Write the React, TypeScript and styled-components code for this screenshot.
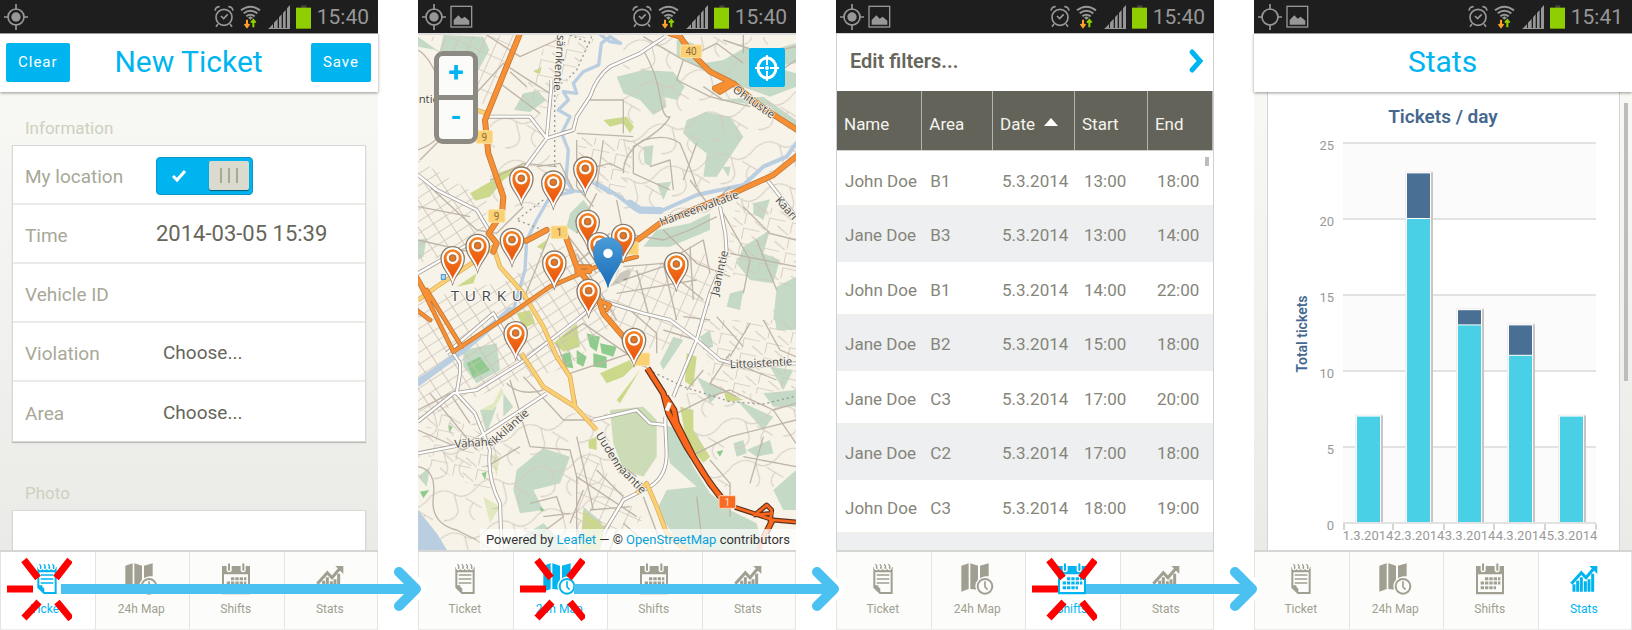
import React from "react";
import styled, { createGlobalStyle, css } from "styled-components";

const BLUE = "#00b4f0";
const ARROW = "#4ac1f0";
const TAUPE = "#a09f91";

const GlobalStyle = createGlobalStyle`
  *, *::before, *::after { box-sizing: border-box; }
  body { margin: 0; background: #fff; font-family: Roboto, sans-serif; color: #66665a; }
  button, input, select { font-family: inherit; }
  a { color: inherit; text-decoration: none; }
`;

/* ---------- shared layout ---------- */

const Board = styled.main`
  display: grid;
  grid-template-columns: repeat(4, minmax(0, 1fr));
  gap: 40px;
  height: 100vh;
  min-height: 480px;
  overflow: hidden;
`;

const Phone = styled.section`
  display: flex;
  flex-direction: column;
  min-width: 0;
  min-height: 0;
`;

const Screen = styled.div`
  position: relative;
  flex: 1;
  min-height: 0;
  overflow: hidden;
  background: linear-gradient(#f8f9f4, #eaebe6);
`;

/* ---------- status bar ---------- */

const StatusRow = styled.div`
  display: flex;
  align-items: center;
  flex: none;
  height: 33px;
  padding: 0 9px 0 4px;
  background: #1e1e1e;
  color: #979797;
`;

const StatusSide = styled.div`
  display: flex;
  align-items: center;
  gap: 4px;
`;

const StatusRight = styled(StatusSide)`
  margin-left: auto;
  gap: 6px;
`;

const Clock = styled.time`
  font-size: 21px;
  line-height: 32px;
`;

function StatusBar({ time, picture, fix }: { time: string; picture?: boolean; fix: boolean }) {
  return (
    <StatusRow>
      <StatusSide>
        <svg width="24" height="26" viewBox="12 10 72 78" fill="none" stroke="#979797">
          <circle cx="48" cy="49" r="24" strokeWidth="5" />
          {fix && <circle cx="48" cy="49" r="14" fill="#979797" stroke="none" />}
          <path d="M48 10V28M48 70V88M12 49H26M70 49H84" strokeWidth="5" />
        </svg>
        {picture && (
          <svg width="23" height="23" viewBox="122 15 69 69">
            <rect x="125" y="19" width="62" height="62" fill="none" stroke="#979797" strokeWidth="4" />
            <path d="M133 74V60L147 46L157 56L166 50L180 62V74Z" fill="#979797" />
          </svg>
        )}
      </StatusSide>
      <StatusRight>
        <svg width="20" height="23" viewBox="638 17 60 69" fill="none" stroke="#979797" strokeWidth="5">
          <circle cx="668" cy="54" r="24" />
          <path d="M659 50L667 58L679 45M650 74L644 82M686 74L692 82M641 34Q643 22 655 22M695 34Q693 22 681 22" />
        </svg>
        <svg width="22" height="24" viewBox="722 12 66 72" fill="none" strokeWidth="6">
          <path d="M725 28Q753 6 782 28M733 37Q753 21 774 37M741 46Q753 36 766 46" stroke="#979797" />
          <path d="M746 50L753 56L761 50L753 46Z" fill="#979797" />
          <path d="M743 56V77M736 69L743 78L750 69" stroke="#ffa02c" />
          <path d="M762 79V58M755 65L762 57L769 65" stroke="#8fce00" />
        </svg>
        <svg width="22" height="24" viewBox="804 12 66 72" fill="#979797">
          <path d="M805 84L819 69V84ZM822 84V65L833 53V84ZM837 84V49L845 40V84ZM849 84V36L857 27V84ZM861 84V22L870 12V84Z" />
          <path d="M805 84H870V81H808Z" />
        </svg>
        <svg width="15" height="24" viewBox="885 13 45 72">
          <rect x="901" y="14" width="15" height="9" fill="#444" />
          <rect x="885" y="21" width="45" height="63" fill="#8fce00" />
        </svg>
        <Clock>{time}</Clock>
      </StatusRight>
    </StatusRow>
  );
}

/* ---------- page header ---------- */

const Header = styled.header`
  position: relative;
  z-index: 1;
  display: grid;
  grid-template-columns: 1fr auto 1fr;
  align-items: center;
  flex: none;
  height: 59px;
  padding: 0 7px 2px 6px;
  background: #fff;
  border-top: 1px solid #9a9a9a;
  box-shadow: 0 1px 3px rgba(0, 0, 0, 0.4);
`;

const Title = styled.h1`
  grid-column: 2;
  margin: 0;
  font-size: 30px;
  line-height: 48px;
  font-weight: 400;
  color: ${BLUE};
`;

const HeaderButton = styled.button<{ $end?: boolean }>`
  justify-self: ${(p) => (p.$end ? "end" : "start")};
  height: 39px;
  padding: 0 12px;
  border: 0;
  border-radius: 2px;
  background: ${BLUE};
  color: #fff;
  font-size: 15px;
  font-weight: 400;
  letter-spacing: 1px;
`;

/* ---------- tab bar ---------- */

const TabRow = styled.nav`
  position: relative;
  display: grid;
  grid-template-columns: repeat(4, 1fr);
  flex: none;
  height: 80px;
  background: #fcfcfa;
  border-top: 2px solid #d6d6d4;
`;

const Tab = styled.a<{ $active: boolean }>`
  position: relative;
  display: flex;
  flex-direction: column;
  align-items: center;
  padding: 11px 2px 0 0;
  border-left: 1px solid #e4e4e2;
  border-bottom: 1px solid #eeeeec;
  color: ${(p) => (p.$active ? BLUE : TAUPE)};
  font-size: 12px;
  line-height: 20px;
  ${(p) => p.$active && css`background: #fff;`}

  > svg { margin-bottom: 4px; }
  &:last-of-type { border-right: 1px solid #e4e4e2; }
`;

const Burst = styled.svg`
  position: absolute;
  left: 5px;
  top: 5px;
  z-index: 2;
`;

const ArrowTrack = styled.div<{ $from: number }>`
  position: absolute;
  z-index: 3;
  top: 17px;
  left: calc(${(p) => p.$from} * 25% + 61px);
  right: -50px;
  display: flex;
  align-items: center;
  pointer-events: none;
`;

const ArrowLine = styled.div`
  flex: 1;
  height: 10px;
  margin-right: -30px;
  background: ${ARROW};
`;

const icons = [
  <svg key="t" width="20" height="32" viewBox="155 762 60 96">
    <path fillRule="evenodd" d="M156 774H214V855H175L156 836ZM162 790V829H171V833L177 839V849H208V790Z" fill="currentColor" />
    <path d="M160 772Q160 781 166 781Q171 781 170 768M173 772Q173 781 178 781Q184 781 183 768M186 772Q186 781 191 781Q197 781 196 768M199 772Q199 781 204 781Q210 781 209 768" fill="none" stroke="#fcfcfa" strokeWidth="6" />
    <path d="M162 766Q168 768 166 780M175 766Q181 768 179 780M188 766Q194 768 192 780M201 766Q207 768 205 780" fill="none" stroke="currentColor" strokeWidth="4" />
    <path d="M166 798H204M166 810H204M166 822H204" stroke="currentColor" strokeWidth="5" />
  </svg>,
  <svg key="m" width="33" height="32" viewBox="417 762 99 96" fill="currentColor">
    <path d="M418 770L440 763V840L418 848ZM445 763L468 770V842L445 840ZM474 770L500 763V802Q480 800 474 812Z" />
    <circle cx="489" cy="832" r="29" fill="#fcfcfa" />
    <circle cx="489" cy="832" r="22" fill="none" stroke="currentColor" strokeWidth="6" />
    <path d="M489 817V834L497 842" fill="none" stroke="currentColor" strokeWidth="5" />
  </svg>,
  <svg key="s" width="28" height="32" viewBox="708 762 84 96" fill="currentColor">
    <path fillRule="evenodd" d="M708 771H792V856H708ZM714 796V849H786V796Z" />
    <path d="M722 768V786Q729 794 737 786V768M764 768V786Q771 794 779 786V768" fill="#fcfcfa" />
    <path d="M729 766V783M772 766V783" stroke="currentColor" strokeWidth="6" strokeLinecap="round" />
    <path d="M735 809H781M722 822H781M722 836H768" stroke="currentColor" strokeWidth="9" strokeDasharray="10 3" />
  </svg>,
  <svg key="c" width="28" height="32" viewBox="994 764 84 96" fill="none" stroke="currentColor">
    <path d="M998 826L1028 793L1042 808L1066 780" strokeWidth="9" />
    <path d="M1052 773H1076V797Z" fill="currentColor" stroke="none" />
    <path d="M1006 850V828M1017 850V817M1028 850V807M1040 850V819M1051 850V813M1062 850V796" strokeWidth="9" />
  </svg>,
];

const tabs = [
  { label: "Ticket", href: "#ticket" },
  { label: "24h Map", href: "#map" },
  { label: "Shifts", href: "#shifts" },
  { label: "Stats", href: "#stats" },
];

function TabBar({ active, arrow = true }: { active: number; arrow?: boolean }) {
  return (
    <TabRow>
      {tabs.map((t, i) => (
        <Tab key={t.label} href={t.href} $active={i === active}>
          {icons[i]}
          {t.label}
          {arrow && i === active && (
            <Burst width="66" height="64" viewBox="6 557 66 64" stroke="#f00" strokeWidth="7">
              <path d="M24 560L38 578M70 560L56 578M7 589H33M24 618L39 602M57 602L71 619" />
            </Burst>
          )}
        </Tab>
      ))}
      {arrow && (
        <ArrowTrack $from={active}>
          <ArrowLine />
          <svg width="40" height="40" viewBox="386 562 40 40" overflow="visible" fill="none" strokeLinecap="round" strokeLinejoin="round">
            <path d="M397 565L414 582L397 599" stroke="#fff" strokeWidth="20" />
            <path d="M397 565L414 582L397 599" stroke={ARROW} strokeWidth="10" />
            <path d="M386 582H412" stroke={ARROW} strokeWidth="10" strokeLinecap="butt" />
          </svg>
        </ArrowTrack>
      )}
    </TabRow>
  );
}

/* ---------- ticket form ---------- */

const Form = styled.form`
  padding: 20px 12px 0;
`;

const Group = styled.section`
  margin-bottom: 35px;
`;

const Legend = styled.h2`
  margin: 0;
  padding: 4px 13px 5px;
  font-size: 17px;
  line-height: 24px;
  font-weight: 400;
  color: #cfcfc0;
`;

const Card = styled.div`
  background: #fff;
  border: 1px solid #d8d8d6;
  box-shadow: 0 1px 1px rgba(0, 0, 0, 0.2);
`;

const Field = styled.div`
  display: flex;
  align-items: center;
  height: 59px;
  padding: 4px 12px 0;
  border-bottom: 2px solid #ebebea;
  &:last-child { border-bottom: 0; }
`;

const FieldLabel = styled.label`
  flex: 0 0 131px;
  font-size: 19px;
  line-height: 24px;
  color: #a8a898;
`;

const TextInput = styled.input`
  flex: 1;
  min-width: 0;
  height: 40px;
  padding: 0 0 4px;
  border: 0;
  outline: 0;
  background: transparent;
  font-size: 22px;
  color: #66665a;
`;

const Picker = styled.select`
  flex: 1;
  min-width: 0;
  height: 40px;
  padding: 0 0 2px 7px;
  border: 0;
  appearance: none;
  background: transparent;
  font-size: 19px;
  color: #66665a;
`;

const Toggle = styled.span`
  position: relative;
  display: flex;
  align-items: center;
  width: 97px;
  height: 38px;
  margin-bottom: 2px;
  padding: 0 3px 0 15px;
  border: 1px solid #0a97c8;
  border-radius: 4px;
  background: ${BLUE};

  input { position: absolute; inset: 0; width: 100%; height: 100%; margin: 0; opacity: 0; }
`;

const Knob = styled.span`
  display: flex;
  align-items: center;
  justify-content: center;
  gap: 6px;
  width: 40px;
  height: 29px;
  margin-left: auto;
  border-radius: 2px;
  background: #dadacf;
  box-shadow: 0 1px 1px rgba(0, 0, 0, 0.5);

  i { width: 2px; height: 15px; background: #a8a898; }
`;

const PhotoArea = styled(Card)`
  height: 120px;
`;

function TicketScreen() {
  return (
    <Phone>
      <StatusBar time="15:40" fix />
      <Header>
        <HeaderButton type="button">Clear</HeaderButton>
        <Title>New Ticket</Title>
        <HeaderButton type="button" $end>Save</HeaderButton>
      </Header>
      <Screen>
        <Form>
          <Group>
            <Legend>Information</Legend>
            <Card>
              <Field>
                <FieldLabel htmlFor="loc">My location</FieldLabel>
                <Toggle>
                  <input id="loc" type="checkbox" defaultChecked />
                  <svg width="14" height="14" viewBox="0 0 14 14" fill="none" stroke="#fff" strokeWidth="3">
                    <path d="M1 7L5 11L13 2" />
                  </svg>
                  <Knob><i /><i /><i /></Knob>
                </Toggle>
              </Field>
              <Field>
                <FieldLabel htmlFor="time">Time</FieldLabel>
                <TextInput id="time" defaultValue="2014-03-05 15:39" />
              </Field>
              <Field>
                <FieldLabel htmlFor="vehicle">Vehicle ID</FieldLabel>
                <TextInput id="vehicle" />
              </Field>
              <Field>
                <FieldLabel htmlFor="violation">Violation</FieldLabel>
                <Picker id="violation"><option>Choose...</option></Picker>
              </Field>
              <Field>
                <FieldLabel htmlFor="area">Area</FieldLabel>
                <Picker id="area"><option>Choose...</option></Picker>
              </Field>
            </Card>
          </Group>
          <Group>
            <Legend>Photo</Legend>
            <PhotoArea />
          </Group>
        </Form>
      </Screen>
      <TabBar active={0} />
    </Phone>
  );
}

/* ---------- map ---------- */

const MapScreenBody = styled(Screen)`
  border-top: 2px solid #dcdcdc;
  background: #f7f3e8;
`;

const MapDrawing = styled.svg`
  display: block;
  width: 100%;
  height: 100%;
`;

const ZoomControl = styled.div`
  position: absolute;
  top: 16px;
  left: 16px;
  display: flex;
  flex-direction: column;
  gap: 5px;
  width: 44px;
  border: 5px solid #8d8a83;
  border-radius: 9px;
  background: #8d8a83;
`;

const ZoomButton = styled.button<{ $bottom?: boolean }>`
  height: 39px;
  padding: 0 0 6px;
  border: 0;
  border-radius: ${(p) => (p.$bottom ? "0 0 4px 4px" : "4px 4px 0 0")};
  background: #fbfbf9;
  color: ${BLUE};
  font-size: 28px;
  line-height: 32px;
  font-weight: 700;
`;

const LocateButton = styled.button`
  position: absolute;
  top: 13px;
  right: 11px;
  display: flex;
  align-items: center;
  justify-content: center;
  width: 36px;
  height: 39px;
  padding: 0;
  border: 0;
  border-radius: 2px;
  background: ${BLUE};
`;

const Attribution = styled.div`
  position: absolute;
  right: 0;
  bottom: 0;
  padding: 1px 6px 0;
  background: rgba(255, 255, 255, 0.7);
  font-size: 13px;
  line-height: 20px;
  white-space: nowrap;
  color: #333;

  a { color: #0ba2dd; }
`;

function Pin({ x, y }: { x: number; y: number }) {
  return (
    <g transform={`translate(${x} ${y})`}>
      <path d="M0 2C-8 -34 -37 -50 -37 -82A37 37 0 0 1 37 -82C37 -50 8 -34 0 2Z" fill="#8a7a68" />
      <path d="M0 -4C-8 -38 -33 -52 -33 -82A33 33 0 0 1 33 -82C33 -52 8 -38 0 -4Z" fill="#fff" />
      <path d="M0 -20C-8 -44 -27 -56 -27 -82A27 27 0 0 1 27 -82C27 -56 8 -44 0 -20Z" fill="url(#pinFill)" />
      <circle cy="-83" r="15" fill="none" stroke="#fff" strokeWidth="7" />
      <circle cy="-83" r="9" fill="none" stroke="#8a7a68" strokeWidth="3" />
    </g>
  );
}

function Shield({ x, y, children, strong }: { x: number; y: number; children?: string; strong?: boolean }) {
  const w = children === "40" ? 64 : 50;
  return (
    <g>
      <rect x={x - w / 2} y={y - 19} width={w} height="38" rx="4" fill={strong ? "#f96b22" : "#fbd072"} stroke={strong ? "#fbd8c0" : "#fbe3a8"} strokeWidth="3" />
      <text x={x} y={y + 11} textAnchor="middle" fontSize="30" fill={strong ? "#ffe0cc" : "#8a6d3c"}>{children}</text>
    </g>
  );
}

const MINOR = [
  "M24 150Q60 170 90 250T180 300L280 190L340 230L420 280",
  "M230 105L330 170L440 120M270 250L390 340M300 215L350 260",
  "M30 480L90 420L80 380M24 450Q100 420 90 380",
  "M700 150Q740 220 750 290T780 350Q760 390 670 440V520L780 570",
  "M500 400L670 410M540 300L640 300V400M640 520Q640 460 700 420Q770 400 810 430Q840 500 860 560",
  "M860 160L920 130L1000 190M940 120L1060 160L1158 140M1000 105V160M1158 180L1100 220",
  "M700 110L820 180L960 240M820 180L800 240L900 290L1020 320M880 260L940 300",
  "M500 420V560L550 620M560 500L600 490L640 510M580 420L560 560",
  "M1000 620L1080 700L1158 720M940 640L1020 780L1000 880M960 760L1158 800M1040 720L1100 870",
  "M620 600L640 700L760 720L840 690L920 650M640 800L760 790L880 720L900 820",
  "M640 840L760 800L880 900M680 810L720 960M760 790L800 960M840 740L850 900M620 880L860 840",
  "M340 620L260 700L200 690M380 500L450 490L490 570M240 540L340 490L440 500",
  "M500 760L620 960M460 690L560 820M420 700L340 900M560 580L500 700M600 700L500 790",
  "M24 620L180 650M60 560L200 690M24 720L200 760",
  "M720 500L780 480L790 570M840 540L900 620L960 560M860 430L820 540M760 690L860 790L960 830",
];

const MINOR_LOW = [
  "M24 470Q80 480 70 560T140 660L200 690M300 210L360 410L480 420L500 500V720",
  "M400 240Q330 260 290 220M230 470L330 410M340 200L460 330L550 330M500 380L550 600",
  "M500 500L680 620M520 540L480 640M560 480L640 560M600 440L680 500M540 600L660 590",
  "M840 440L960 380L1158 330M780 320L900 260L960 240L1090 300L1158 280M900 450L960 520V620",
  "M960 130L900 220L980 260M1060 30L1110 120L1158 140M1020 40L960 140M920 20L1000 110",
  "M1000 440L1158 470M1060 380L1020 520M1090 300L1158 400M880 180L830 240",
  "M360 580L440 560L460 620L380 680M400 620L480 610M340 660L420 690",
  "M460 80L520 40L620 110L720 180M480 190L600 150L660 130M440 100L480 200L500 280",
  "M24 360L160 420L230 380M60 250L200 420M24 300L120 250L180 340",
  "M640 640L720 710M700 560L760 720M860 560L880 720M620 660L600 720",
  "M820 20L900 30M760 60L860 90M1000 170L1100 210M660 0L740 70L740 130",
];

function TurkuMap() {
  return (
    <MapDrawing viewBox="24 105 1134 1545" preserveAspectRatio="xMidYMin slice" role="img" aria-label="Map of Turku">
      <defs>
        <linearGradient id="pinFill" x1="0" x2="0" y1="0" y2="1">
          <stop offset="0" stopColor="#f58220" />
          <stop offset="1" stopColor="#e8520c" />
        </linearGradient>
        <linearGradient id="blueFill" x1="0" x2="0" y1="0" y2="1">
          <stop offset="0" stopColor="#4a9bd6" />
          <stop offset="1" stopColor="#176bb8" />
        </linearGradient>
        <pattern id="blocksA" width="44" height="30" patternUnits="userSpaceOnUse" patternTransform="rotate(-33)">
          <path d="M0 1H44M1 0V30" stroke="#cdc3b8" strokeWidth="3" />
        </pattern>
        <pattern id="blocksB" width="36" height="52" patternUnits="userSpaceOnUse" patternTransform="rotate(24)">
          <path d="M0 1H36M1 0V52" stroke="#d0c7bc" strokeWidth="3" />
        </pattern>
        <pattern id="blocksC" width="70" height="46" patternUnits="userSpaceOnUse" patternTransform="rotate(12)">
          <path d="M0 1H50M1 0V34M30 20L66 40" stroke="#d0c7bc" strokeWidth="3" fill="none" />
        </pattern>
        <pattern id="lanes" width="150" height="130" patternUnits="userSpaceOnUse" patternTransform="rotate(-14)">
          <path d="M0 30Q40 10 70 40T150 30M70 40V90Q60 120 20 110M100 60L140 100M110 130Q90 100 120 80" stroke="#d3cac0" strokeWidth="3" fill="none" />
        </pattern>
      </defs>
      <rect x="24" y="105" width="1134" height="1560" fill="#f7f3e8" />

      {/* woods and parks */}
      <g fill="#c4dac6">
        <path d="M100 105L220 110L238 150L200 220L140 200L90 150ZM24 110L80 150L24 140Z" />
        <path d="M340 280L384 272L408 300L360 336L312 330Z" />
        <path d="M620 230L700 210L790 215L824 260L800 300L760 290L770 320L730 345L690 300L640 280Z" />
        <path d="M800 120L850 130L880 190L940 180L1010 140L1050 160L1158 130V190L1090 200L1158 220V260L1080 290L940 240L860 200L800 170Z" />
        <path d="M830 360L890 336L960 350L1000 410L960 470L920 530L880 530L890 460L850 430L820 400Z" />
        <path d="M700 440L730 436L724 500L704 490ZM920 300L1080 320L1158 400V360L1060 290Z" />
        <path d="M1030 610L1080 598L1060 660L1030 640ZM1000 740L1080 690L1060 760L1110 780L1090 850L1020 840L980 790Z" />
        <path d="M740 690L840 670L900 640L900 690L780 740L700 740ZM480 640L520 600L560 650L500 700L470 680Z" />
        <path d="M1100 860L1158 830V960H1090ZM960 880L1000 870L990 930L950 920Z" />
        <path d="M740 550L784 545L760 600ZM936 500L962 500L955 530ZM24 720L50 715L40 770L24 780Z" />
      </g>
      <g fill="#c4dac6" transform="translate(0 930)">
        <path d="M160 120L260 100L270 180L200 220L160 170Z" />
        <path d="M210 300L260 290L230 370ZM280 250L310 290L280 320Z" />
        <path d="M320 480L400 415L480 440L450 520L370 540L400 600L330 610L310 540Z" />
        <path d="M600 300L700 290L740 330L740 440L700 500L640 480L610 400Z" fill="#cbdcb6" />
        <path d="M760 340L800 360L850 470L900 550L960 600L1040 640L1060 720H820L740 600L770 540L860 530L780 460Z" />
        <path d="M1090 0H1158V60H1100ZM790 80L820 90L760 180L750 160ZM860 200L940 240L900 280ZM1080 170L1150 180L1120 240Z" />
        <path d="M1010 420L1080 390L1090 430L1040 440ZM1090 540L1158 480V600L1120 600ZM980 270L1090 320L1060 360ZM520 590L580 640L520 640Z" />
        <path d="M300 700L400 640L480 720H280ZM24 500L60 470L50 530Z" />
        <path d="M970 400L1000 390L1010 430L980 440ZM870 80L900 60L910 110L880 120ZM1060 250L1158 240V290L1090 290Z" />
      </g>
      <g fill="#ccd98b">
        <path d="M180 580L240 545L260 520L350 490L280 540L240 590L196 602Z" />
        <path d="M580 360L650 350L672 380L660 400L640 370L600 380ZM370 215L395 200L390 222Z" />
        <path d="M380 740L410 720L400 750ZM140 860L200 820L190 850Z" />
        <g transform="translate(0 930)">
          <path d="M430 100L500 40L510 110L460 125ZM570 190L660 150L670 170L640 200L590 220Z" />
          <path d="M320 10L360 0L376 40L340 55ZM536 390L560 380L560 420L536 415Z" />
          <path d="M810 290L850 300L850 360L900 440L880 458L830 400ZM830 130L860 140L850 230L825 215Z" />
          <path d="M520 600L585 650L570 720H510ZM940 240L1000 270L950 275ZM620 270L690 180L630 280Z" />
          <path d="M210 300L250 280L275 230L280 250L250 300ZM240 430L270 440L260 500ZM220 560L270 590L240 640Z" fill="#e2e9c0" />
        </g>
      </g>
      <g fill="#8fcb8c" transform="translate(0 930)">
        <path d="M170 160L210 140L240 180L190 205ZM455 135L480 125L490 175L460 170ZM500 120L530 140L520 170L500 160ZM530 70L570 80L560 125L540 110ZM550 130L590 140L590 175L550 170ZM570 100L620 110L610 140L575 130Z" />
        <path d="M30 545L58 540L40 565ZM215 490L230 485L225 510ZM920 425L940 420L930 440ZM390 590L405 600L392 605ZM115 345L128 350L118 370Z" />
      </g>

      {/* street grids */}
      <path d="M60 110L330 105L240 320L120 270Z" fill="url(#blocksB)" />
      <path d="M24 480L230 600L230 730L24 790Z" fill="url(#blocksA)" />
      <path d="M24 900L300 840L420 730L560 760L620 960L480 1100L300 1150L24 1260Z" fill="url(#blocksA)" />
      <path d="M420 105H560L420 330L330 300Z" fill="url(#blocksC)" />
      <path d="M620 810L900 760L900 960L740 1060L600 960Z" fill="url(#blocksB)" />
      <path d="M500 410L680 420L640 600L520 560Z" fill="url(#blocksC)" />
      <path d="M880 960H1158V1180H900Z" fill="url(#blocksC)" />
      <path d="M40 1200L280 1340L240 1480L60 1400Z" fill="url(#blocksC)" />
      <path d="M520 1330L700 1560L500 1650V1400Z" fill="url(#blocksB)" />
      <path d="M980 600L1158 640V860L940 820Z" fill="url(#blocksC)" />
      <path d="M640 110H1158V640H640ZM24 1240H600V1653H24ZM820 1180H1158V1460H900ZM240 340H420V620H240Z" fill="url(#lanes)" />

      {/* water */}
      <g fill="none" stroke="#b9cee0" strokeLinejoin="round" strokeLinecap="round">
        <path d="M572 105L600 125L632 130L600 110L574 130L566 195L520 215L490 250L500 280L460 275L475 300L445 330L480 350L455 400L475 450L468 540L490 575L420 590L380 660L350 720L345 810L310 930L150 1060L24 1140" strokeWidth="10" />
        <path d="M468 570L520 576M550 550L600 580" strokeWidth="9" />
        <path d="M560 550L620 585L680 630L760 630L860 585L1000 555L1060 500L1130 470L1158 430" strokeWidth="12" />
        <path d="M660 610L690 630L750 632" strokeWidth="22" />
        <path d="M300 930L160 1050L24 1150" strokeWidth="18" />
      </g>
      <path d="M24 1530L80 1600L120 1665H24Z" fill="#b9cee0" />

      {/* minor roads */}
      <g fill="none" stroke="#bfb4a8" strokeWidth="4" strokeLinejoin="round">
        {MINOR.map((d) => <path key={d} d={d} />)}
        <g transform="translate(0 930)">{MINOR_LOW.map((d) => <path key={d} d={d} />)}</g>
      </g>
      <g fill="none" stroke="#999" strokeWidth="4" strokeDasharray="6 9">
        <path d="M434 240V500M545 110L500 210L470 240M480 105L540 130M400 600L320 660L400 690" />
        <path d="M716 1110L820 1160L960 1205L1060 1212L1158 1188" />
      </g>

      {/* white main roads */}
      {[["#a9a29b", 12], ["#fff", 7]].map(([c, w]) => (
        <g key={c} fill="none" stroke={c as string} strokeWidth={w} strokeLinejoin="round">
          <path d="M765 110L690 160L600 200Q560 230 540 290L500 350L490 390L410 415L340 510M230 350L360 350L410 415L424 260V240" />
          <path d="M24 525L80 570L200 630L236 690M1072 540L1158 650M930 620L946 700L950 760L900 880L860 1020L790 1190" />
          <path d="M570 900L700 940L780 960L860 1020L930 1080L1000 1100L1158 1090" />
          <path d="M24 820L180 730M24 1265L130 1180L200 1170L330 1090L500 960L560 910" />
          <path d="M130 1060L150 1090V1120L140 1180L195 1240L240 1350Q230 1430 270 1510L275 1653M24 1360L180 1330L410 1180M110 1060L250 940L330 1080" />
          <path d="M550 1260L680 1230L720 1270L766 1275L770 1360Q770 1430 720 1460L640 1500L580 1600M766 1275V1250" />
        </g>
      ))}

      {/* yellow secondary roads */}
      {[["#d9a95a", 14], ["#fbd072", 10]].map(([c, w]) => (
        <g key={c} fill="none" stroke={c as string} strokeWidth={w} strokeLinejoin="round">
          <path d="M70 300L130 310L230 340M24 900L80 860L200 780L250 740L270 800L340 880L400 980L440 1070L480 1130L495 1220" />
          <path d="M334 1060L400 1160L495 1220L560 1290M680 1480L710 1450L740 1520L770 1600L830 1653" />
        </g>
      ))}

      {/* trunk roads */}
      {[["#bf7a3c", 18], ["#f98f33", 13]].map(([c, w]) => (
        <g key={c} fill="none" stroke={c as string} strokeWidth={w} strokeLinejoin="round" strokeLinecap="round">
          <path d="M332 95L225 360L235 460L280 590L276 640L236 700L260 730L250 755" />
          <path d="M780 100L810 110L850 165L900 215L960 245L915 265L930 275L970 250L1040 310L1100 350L1170 395" />
          <path d="M1170 460L1090 525L970 580L750 670L680 722M410 690L350 722L280 720M460 690L500 800L560 880L580 940L640 1010L700 1090" />
          <path d="M680 770L560 800L420 860L290 950L130 1055L24 840M20 930L60 960M50 870L155 1040M20 830L60 900" strokeWidth={(w as number) - 4} />
          <path d="M500 800H540V815H500ZM560 900L600 915L590 930" strokeWidth={(w as number) - 4} />
        </g>
      ))}

      {/* motorway */}
      {[["#5d3320", 20], ["#fa661b", 13]].map(([c, w]) => (
        <g key={c} fill="none" stroke={c as string} strokeWidth={w} strokeLinejoin="round">
          <path d="M712 1105L760 1180L776 1240L830 1340L880 1420L930 1490M766 1190L792 1230L800 1270L850 1370L900 1450L940 1500" />
          <path d="M975 1522L1030 1540L1090 1560L1158 1566M1040 1540L1070 1515L1085 1530L1080 1570L1060 1610M1030 1545L1090 1540M1090 1560L1070 1600" strokeWidth={(w as number) - 5} />
        </g>
      ))}
      <path d="M1070 1590L1045 1650" stroke="#f0a58c" strokeWidth="12" />
      <path d="M770 1232L780 1208" stroke="#fff" strokeWidth="12" />

      <Shield x={843} y={154}>40</Shield>
      <Shield x={223} y={411}>9</Shield>
      <Shield x={260} y={648}>9</Shield>
      <Shield x={448} y={697}>1</Shield>
      <Shield x={694} y={1078} />
      <Shield x={660} y={745} />
      <Shield x={952} y={1506} strong>1</Shield>

      {/* place names */}
      <g fontFamily="Open Sans, sans-serif" fontSize="34" fill="#484848" stroke="#f7f3e8" strokeWidth="5" paintOrder="stroke" strokeLinejoin="round">
        <text transform="translate(442 104) rotate(94)">särnkentie</text>
        <text x="26" y="308">ntie</text>
        <text transform="translate(966 274) rotate(35)">Ohitustie</text>
        <text transform="translate(754 678) rotate(-20)">Hämeenvaltatie</text>
        <text transform="translate(1094 602) rotate(48)">Kaari</text>
        <text transform="translate(924 888) rotate(-77)">Jaanintie</text>
        <text transform="translate(960 1105) rotate(-3)">Littoistentie</text>
        <text transform="translate(134 1344) rotate(-4)">Vähähe</text>
        <text transform="translate(254 1336) rotate(-42)">ikkiläntie</text>
        <text transform="translate(556 1306) rotate(58)">Uudenm</text>
        <text transform="translate(626 1412) rotate(46)">aantie</text>
        <text x="122" y="904" fontSize="46" letterSpacing="17" stroke="#fff">TURKU</text>
      </g>
      <rect x="94" y="824" width="12" height="14" fill="#b8dcf2" stroke="#3d8fd0" strokeWidth="3" />

      <Pin x={526} y={588} />
      <Pin x={334} y={618} />
      <Pin x={430} y={630} />
      <Pin x={533} y={748} />
      <Pin x={568} y={815} />
      <Pin x={640} y={790} />
      <Pin x={306} y={802} />
      <Pin x={203} y={820} />
      <Pin x={128} y={857} />
      <Pin x={433} y={870} />
      <Pin x={799} y={875} />
      <path d="M600 860L630 820Q680 790 650 840Z" fill="#000" opacity="0.18" />
      <path d="M594 866C584 820 549 800 549 757A45 45 0 0 1 639 757C639 800 604 820 594 866Z" fill="url(#blueFill)" />
      <circle cx="594" cy="760" r="14" fill="#fff" />
      <Pin x={536} y={955} />
      <Pin x={317} y={1082} />
      <Pin x={672} y={1102} />
    </MapDrawing>
  );
}

function MapScreen() {
  return (
    <Phone>
      <StatusBar time="15:40" picture fix />
      <MapScreenBody>
        <TurkuMap />
        <ZoomControl>
          <ZoomButton type="button" aria-label="Zoom in">+</ZoomButton>
          <ZoomButton type="button" aria-label="Zoom out" $bottom>-</ZoomButton>
        </ZoomControl>
        <LocateButton type="button" aria-label="Locate me">
          <svg width="24" height="26" viewBox="0 0 24 26" fill="none" stroke="#fff" strokeWidth="3">
            <ellipse cx="12" cy="13" rx="9" ry="10" />
            <path d="M12 0V10M12 16V26M0 13H9M15 13H24" strokeWidth="2" />
            <circle cx="12" cy="13" r="2" fill="#fff" stroke="none" />
          </svg>
        </LocateButton>
        <Attribution>
          Powered by <a href="#leaflet">Leaflet</a> — © <a href="#osm">OpenStreetMap</a> contributors
        </Attribution>
      </MapScreenBody>
      <TabBar active={1} />
    </Phone>
  );
}

/* ---------- shifts ---------- */

const ShiftBody = styled(Screen)`
  background: #fff;
  border: 1px solid #cfd0d2;
  border-bottom: 0;
`;

const FilterButton = styled.button`
  display: flex;
  align-items: center;
  justify-content: space-between;
  width: 100%;
  height: 57px;
  padding: 0 9px 4px 13px;
  border: 0;
  background: #fff;
  color: #66665a;
  font-size: 20px;
  font-weight: 600;
`;

const ShiftTable = styled.table`
  width: 100%;
  border-collapse: separate;
  border-spacing: 0;
  table-layout: fixed;
  font-size: 17px;
  line-height: 24px;

  th {
    height: 59px;
    padding: 6px 0 0 7px;
    background: #64635a;
    border-right: 1px solid #b4b4ae;
    color: #f4f4ee;
    font-weight: 400;
    text-align: left;
    white-space: nowrap;
  }
  td {
    height: 54px;
    padding: 3px 0 0 8px;
    border-bottom: 2px solid #f0f0ea;
    color: #85857a;
    white-space: nowrap;
  }
  td:nth-child(n + 3) { padding-left: 9px; }
  tbody tr:first-child td { height: 57px; padding-top: 6px; border-top: 1px solid #cfcfca; }
  tbody tr:nth-child(even) td { height: 55px; padding-top: 0; background: #eeeff1; border-bottom: 0; }
`;

const Col = styled.col<{ $share: number }>`
  width: ${(p) => p.$share}%;
`;

const SortMark = styled.svg`
  margin-left: 9px;
  vertical-align: 4px;
`;

const ScrollThumb = styled.span<{ $top: number; $length: number; $right: number }>`
  position: absolute;
  top: ${(p) => p.$top}px;
  right: ${(p) => p.$right}px;
  width: 4px;
  height: ${(p) => p.$length}px;
  background: #bdbdbd;
`;

const shifts = [
  ["John Doe", "B1", "5.3.2014", "13:00", "18:00"],
  ["Jane Doe", "B3", "5.3.2014", "13:00", "14:00"],
  ["John Doe", "B1", "5.3.2014", "14:00", "22:00"],
  ["Jane Doe", "B2", "5.3.2014", "15:00", "18:00"],
  ["Jane Doe", "C3", "5.3.2014", "17:00", "20:00"],
  ["Jane Doe", "C2", "5.3.2014", "17:00", "18:00"],
  ["John Doe", "C3", "5.3.2014", "18:00", "19:00"],
  ["", "", "", "", ""],
];

function ShiftsScreen() {
  return (
    <Phone>
      <StatusBar time="15:40" picture fix />
      <ShiftBody>
        <FilterButton type="button">
          Edit filters...
          <svg width="16" height="26" viewBox="0 0 16 26" fill="none" stroke={BLUE} strokeWidth="5" strokeLinecap="round">
            <path d="M4 4L12 13L4 22" />
          </svg>
        </FilterButton>
        <ShiftTable>
          <colgroup>
            <Col $share={22.7} />
            <Col $share={18.8} />
            <Col $share={21.8} />
            <Col $share={19.4} />
            <Col $share={17.3} />
          </colgroup>
          <thead>
            <tr>
              <th>Name</th>
              <th>Area</th>
              <th>
                Date
                <SortMark width="14" height="8" viewBox="0 0 14 8"><path d="M0 8L7 0L14 8Z" fill="#fff" /></SortMark>
              </th>
              <th>Start</th>
              <th>End</th>
            </tr>
          </thead>
          <tbody>
            {shifts.map((row, i) => (
              <tr key={i}>{row.map((c, j) => <td key={j}>{c}</td>)}</tr>
            ))}
          </tbody>
        </ShiftTable>
        <ScrollThumb $top={123} $length={9} $right={4} />
      </ShiftBody>
      <TabBar active={2} />
    </Phone>
  );
}

/* ---------- stats ---------- */

const ChartCard = styled.div`
  height: 100%;
  margin: 0 12px 0 13px;
  background: #fff;
  border: solid #d4d4d2;
  border-width: 0 1px;
`;

const Chart = styled.svg`
  display: block;
  width: 100%;
  height: 100%;
`;

const days = [
  { day: "1.3.2014", base: 7, extra: 0 },
  { day: "2.3.2014", base: 20, extra: 3 },
  { day: "3.3.2014", base: 13, extra: 1 },
  { day: "4.3.2014", base: 11, extra: 2 },
  { day: "5.3.2014", base: 7, extra: 0 },
];

const UNIT = 76 / 5;
const ZERO = 431;

function StatsChart() {
  return (
    <Chart viewBox="0 0 351 457" preserveAspectRatio="xMidYMin meet" role="img" aria-label="Tickets per day">
      <text x="175" y="31" textAnchor="middle" fontSize="19" fontWeight="600" fill="#46688f">Tickets / day</text>
      <text transform="translate(39 242) rotate(-90)" textAnchor="middle" fontSize="14" fontWeight="600" fill="#46688f">Total tickets</text>
      {[25, 20, 15, 10, 5, 0].map((v) => {
        const y = ZERO - v * UNIT;
        return (
          <g key={v}>
            {v % 10 === 5 && <rect x="75" y={y} width="253" height="76" fill="#fbfbfb" />}
            <path d={`M75 ${y}H328`} stroke="#e2e2e2" strokeWidth="2" />
            <text x="66" y={y + 7} textAnchor="end" fontSize="13" fill="#999">{v}</text>
          </g>
        );
      })}
      {days.map((d, i) => {
        const x = 89 + i * 51 - (i > 0 ? 1 : 0);
        const top = ZERO - (d.base + d.extra) * UNIT;
        const mid = ZERO - d.base * UNIT;
        return (
          <g key={d.day}>
            <rect x={x - 2} y={top - 2} width="28" height={ZERO - top + 1} fill="#ececec" />
            <rect x={x + 24} y={top - 1} width="2" height={ZERO - top} fill="#c6c6c6" />
            <rect x={x - 1} y={top - 1} width="25" height={ZERO - top} fill="#fff" />
            {d.extra > 0 && <rect x={x} y={top} width="23" height={mid - top - 1} fill="#4a6f94" />}
            <rect x={x} y={mid} width="23" height={ZERO - mid - 1} fill="#49cfe6" />
            <text x={100 + i * 51} y="448" textAnchor="middle" fontSize="13" fill="#999">{d.day}</text>
          </g>
        );
      })}
      <path d="M76 432V438M125 432V438M176 432V438M226 432V438M277 432V438M328 432V438" stroke="#aaa" />
    </Chart>
  );
}

function StatsScreen() {
  return (
    <Phone>
      <StatusBar time="15:41" picture fix={false} />
      <Header><Title>Stats</Title></Header>
      <Screen>
        <ChartCard><StatsChart /></ChartCard>
        <ScrollThumb $top={11} $length={278} $right={4} />
      </Screen>
      <TabBar active={3} arrow={false} />
    </Phone>
  );
}

export default function App() {
  return (
    <>
      <GlobalStyle />
      <Board>
        <TicketScreen />
        <MapScreen />
        <ShiftsScreen />
        <StatsScreen />
      </Board>
    </>
  );
}
